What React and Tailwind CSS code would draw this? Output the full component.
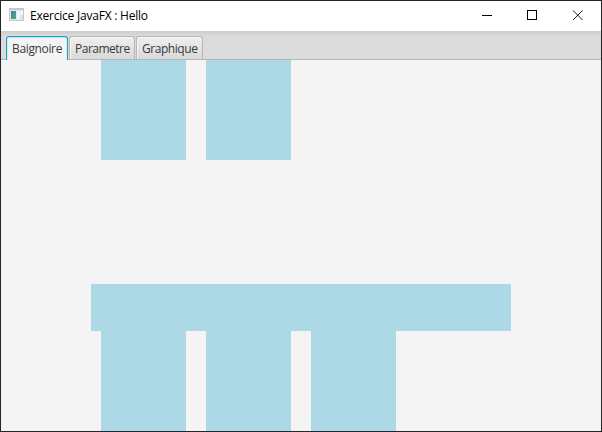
function WindowIcon() {
  return (
    <svg width="16" height="14" viewBox="0 0 16 14" shapeRendering="crispEdges">
      <defs>
        <linearGradient id="pane" x1="0" y1="0" x2="1" y2="1">
          <stop offset="0" stopColor="#4479a8" />
          <stop offset="1" stopColor="#4fae84" />
        </linearGradient>
      </defs>
      <rect width="15" height="13" fill="#c3c7cc" />
      <rect x="1" y="2" width="13" height="10" fill="#e6e8ec" />
      <rect x="2" y="3" width="5" height="8" fill="url(#pane)" />
      <rect x="8" y="3" width="3" height="8" fill="#f3f4f6" />
      <rect x="12" y="3" width="2" height="4" fill="#f8f9fa" />
      <rect x="12" y="7" width="2" height="4" fill="#d5e3d8" />
    </svg>
  );
}

function TitleBar() {
  return (
    <header className="flex h-[30px] shrink-0 items-center bg-white">
      <div className="mb-0.5 ml-2 w-4"><WindowIcon /></div>
      <h1 className="ml-[5px] grow whitespace-nowrap text-[12px] leading-4 tracking-[-0.22px] text-black">
        Exercice JavaFX : Hello
      </h1>
      <div className="flex h-full w-[137px] shrink-0">
        <svg width="137" height="30" viewBox="0 0 137 30" fill="none" stroke="#000">
          <path d="M18 14.5h10M63.5 9.5h9v9h-9z" shapeRendering="crispEdges" />
          <path d="M109 9.5l9.5 9.5M118.5 9.5l-9.5 9.5" strokeWidth="0.9" />
        </svg>
      </div>
    </header>
  );
}

function Tabs() {
  return (
    <nav className="flex h-[29px] shrink-0 items-end gap-px border-b border-[#b5b5b5] bg-linear-to-b from-[#cecece] to-[#dcdcdc] to-20% pl-[5px] text-[12px] leading-4 text-[#3a3a3a]">
      <div className="-mb-px flex h-6 w-[62px] rounded-t-[3px] border border-b-0 border-[#1ba1cf] bg-[#f4f4f4] pt-1 pl-[5px] shadow-[inset_0_1px_0_#b7e2f0,inset_1px_0_0_#d3ebf3,inset_-1px_0_0_#d3ebf3]">
        <span className="tracking-[-0.35px]">Baignoire</span>
      </div>
      <div className="flex h-[23px] w-[66px] rounded-t-[3px] border border-b-0 border-[#b5b5b5] bg-linear-to-b from-[#efefef] to-[#d9d9d9] pt-1 pl-[5px] shadow-[inset_1px_1px_0_#f7f7f7]">
        <span className="tracking-[-0.5px]">Parametre</span>
      </div>
      <div className="flex h-[23px] w-[67px] rounded-t-[3px] border border-b-0 border-[#b5b5b5] bg-linear-to-b from-[#efefef] to-[#d9d9d9] pt-1 pl-[5px] shadow-[inset_1px_1px_0_#f7f7f7]">
        <span className="tracking-[-0.45px]">Graphique</span>
      </div>
    </nav>
  );
}

function Block() {
  return <div className="h-full w-[85px] bg-[#add8e6]" />;
}

export default function App() {
  return (
    <div className="flex h-[432px] w-[602px] flex-col overflow-hidden border border-[#262628] bg-[#f4f4f4] font-['Open_Sans','Noto_Sans',sans-serif]">
      <TitleBar />
      <Tabs />
      <main className="flex grow flex-col">
        <div className="ml-[100px] flex h-[100px] gap-5">
          <Block />
          <Block />
        </div>
        <div className="mt-[124px] ml-[90px] h-[47px] w-[420px] bg-[#add8e6]" />
        <div className="ml-[100px] flex h-[100px] gap-5">
          <Block />
          <Block />
          <Block />
        </div>
      </main>
    </div>
  );
}
